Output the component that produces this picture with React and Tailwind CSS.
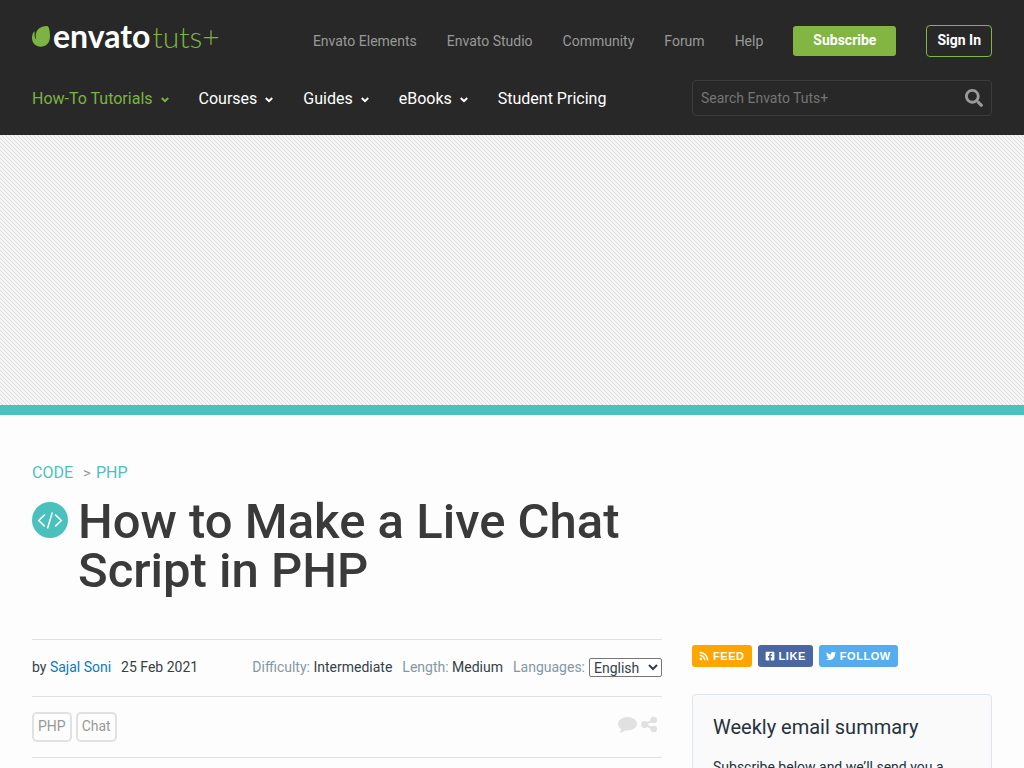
import React from "react";
import { FaSearch, FaShareAlt, FaRss, FaTwitter, FaFacebookSquare } from "react-icons/fa";

const topLinks = ["Envato Elements", "Envato Studio", "Community", "Forum", "Help"];
const navItems = [
  { label: "How-To Tutorials", menu: true, active: true },
  { label: "Courses", menu: true },
  { label: "Guides", menu: true },
  { label: "eBooks", menu: true },
  { label: "Student Pricing" },
];

function Chevron() {
  return (
    <svg width="8" height="6" viewBox="0 0 8 6" fill="none" stroke="currentColor" strokeWidth="2" className="mt-[2px]" aria-hidden="true">
      <path d="M0.8 1 4 4.2 7.2 1" />
    </svg>
  );
}

function Logo() {
  return (
    <a href="#" className="mb-[10px] flex h-8 items-center whitespace-nowrap font-['Lato',sans-serif] text-[32px] leading-8">
      <svg width="18" height="21" viewBox="0 0 18 21" className="mr-[3px] shrink-0" fill="#7cb342" aria-hidden="true">
        <path d="M15.800.3C13.400-.5 8.400.8 5.900 3.600 3.600 6.200 3.500 9.300 3.900 12.600c0 .4-.3.400-.5.1C2.700 11.200 2.500 8.800 2.700 6.100c0-.5-.5-.7-.8-.3C.7 7.400 0 9.700 0 12.100 0 17 3.800 20.700 8.600 20.700c5.600 0 8.800-3.900 9.300-8.800C18.300 7.600 17.400 1.500 15.800.3Z" />
      </svg>
      <span className="flex items-baseline gap-[2px]">
        <span className="font-bold text-white">envato</span>
        <span className="text-[30px] font-light text-[#7cb342]">tuts+</span>
      </span>
    </a>
  );
}

function Header() {
  return (
    <header className="bg-[#282828] px-8 pb-[19px] pt-[21px]">
      <div className="flex h-10 items-center justify-between">
        <Logo />
        <nav aria-label="Envato" className="flex items-center gap-[30px] text-sm text-[#999]">
          {topLinks.map((l) => (
            <a key={l} href="#" className="pb-px">{l}</a>
          ))}
          <a href="#" className="rounded-[3px] bg-[#82b541] px-5 pb-[6px] pt-1 font-bold text-white">Subscribe</a>
          <a href="#" className="rounded border border-[#82b541] px-[10px] pb-[6px] pt-1 font-bold text-white">Sign In</a>
        </nav>
      </div>
      <div className="mt-[19px] flex items-center justify-between">
        <nav aria-label="Main" className="flex items-center gap-[30px] pt-px text-base">
          {navItems.map((n) => (
            <a key={n.label} href="#" className={n.active ? "flex items-center gap-2 text-[#7cb342]" : "flex items-center gap-2 text-white"}>
              {n.label}
              {n.menu && <Chevron />}
            </a>
          ))}
        </nav>
        <form role="search" className="flex h-9 w-[300px] items-center rounded border border-[#3d3d3d] px-2" onSubmit={(e) => e.preventDefault()}>
          <input type="search" aria-label="Search Envato Tuts+" placeholder="Search Envato Tuts+" className="min-w-0 flex-1 bg-transparent text-sm text-white outline-none placeholder:text-[#757575]" />
          <button type="submit" aria-label="Search" className="text-[#999]">
            <FaSearch size={18} />
          </button>
        </form>
      </div>
    </header>
  );
}

function CodeBadge() {
  return (
    <svg width="36" height="36" viewBox="0 0 36 36" className="mt-[5px] shrink-0" fill="none" aria-hidden="true">
      <circle cx="18" cy="18" r="18" fill="#4bc1be" />
      <path d="M12.800 12.600 6.700 18.500l6.100 5.900M23.200 12.600l6.100 5.900-6.100 5.900M20.300 10.500l-4.800 16" stroke="#fff" strokeWidth="1.500" />
    </svg>
  );
}

function Share({ icon: Icon, label, color }) {
  return (
    <a href="#" className={`flex h-[22px] items-center gap-1 rounded-[3px] px-[7px] font-['Liberation_Sans',sans-serif] text-[11px] font-bold tracking-wider text-white ${color}`}>
      <Icon size={10} />
      {label}
    </a>
  );
}

export default function App() {
  return (
    <div className="min-h-screen bg-[#fdfdfd] font-['Roboto',sans-serif] text-[#3a3a3a]">
      <Header />
      <div className="h-[270px] bg-[#f5f5f5] bg-[linear-gradient(45deg,#dedede_12.5%,transparent_12.5%,transparent_50%,#dedede_50%,#dedede_62.5%,transparent_62.5%)] bg-size-[4px_4px]" />
      <div className="h-[10px] bg-[#4bc1be]" />
      <main className="grid grid-cols-[minmax(0,1fr)_300px] gap-x-[30px] px-8 pt-[46px]">
        <div className="min-h-[178px]">
          <nav aria-label="Breadcrumb" className="flex items-baseline text-base leading-6 text-[#4bc1be]">
            <a href="#">CODE</a>
            <span className="ml-[10px] mr-[5px] text-[15px] text-[#999]">&gt;</span>
            <a href="#">PHP</a>
          </nav>
          <div className="mt-3 flex gap-[10px]">
            <CodeBadge />
            <h1 className="text-[49px] font-medium leading-[49px]">How to Make a Live Chat Script in PHP</h1>
          </div>
        </div>
        <article className="col-start-1 border-t border-[#e1e1e1]">
          <div className="flex h-14 items-center justify-between pb-[2px] text-sm text-[#363f47]">
            <div className="flex gap-[10px]">
              <span>by <a href="#" className="text-[#0a7bbb]">Sajal Soni</a></span>
              <time dateTime="2021-02-25">25 Feb 2021</time>
            </div>
            <div className="flex items-center gap-[10px]">
              <span><span className="text-[#8398a5]">Difficulty:</span> Intermediate</span>
              <span><span className="text-[#8398a5]">Length:</span> Medium</span>
              <div className="flex items-center gap-1">
                <label htmlFor="language" className="text-[#8398a5]">Languages:</label>
                <select id="language" defaultValue="English" className="h-[19px] w-[73px] rounded-[2px] border border-[#767676] bg-white">
                  <option>English</option>
                </select>
              </div>
            </div>
          </div>
          <div className="flex h-[62px] items-center justify-between border-y border-[#e1e1e1]">
            <div className="flex gap-1 text-sm text-[#999]">
              <a href="#" className="rounded-[5px] border-2 border-[#e1e1e1] px-1 pb-1 pt-[2px]">PHP</a>
              <a href="#" className="rounded-[5px] border-2 border-[#e1e1e1] px-1 pb-1 pt-[2px]">Chat</a>
            </div>
            <div className="mb-[6px] mr-1 flex items-center gap-1 text-[#e1e1e1]">
              <a href="#" aria-label="Comments">
                <svg width="19" height="17" viewBox="0 0 19 17" fill="currentColor" aria-hidden="true">
                  <path d="M9.500 1C14.700 1 19 4 19 7.800s-4.300 6.700-9.500 6.700c-.8 0-1.600-.1-2.300-.2-1.600 1.500-3.600 2.200-5.700 2.400.9-.9 1.500-2 1.600-3.500C1.200 12 0 10 0 7.800 0 4 4.300 1 9.500 1Z" />
                </svg>
              </a>
              <a href="#" aria-label="Share">
                <svg width="17" height="17" viewBox="0 0 17 17" fill="currentColor" aria-hidden="true">
                  <circle cx="3.500" cy="8.500" r="3.400" />
                  <circle cx="12.700" cy="4" r="3.300" />
                  <circle cx="12.700" cy="13" r="3.300" />
                  <path d="M12.700 4 3.500 8.500l9.200 4.500" fill="none" stroke="currentColor" strokeWidth="2" />
                </svg>
              </a>
            </div>
          </div>
        </article>
        <aside className="col-start-2 pt-[6px]">
          <div className="flex gap-[6px]">
            <Share icon={FaRss} label="FEED" color="bg-[#ffa500]" />
            <Share icon={FaFacebookSquare} label="LIKE" color="bg-[#4b67a1]" />
            <Share icon={FaTwitter} label="FOLLOW" color="bg-[#55acee]" />
          </div>
          <section className="mt-[27px] rounded border border-[#dfe5ea] bg-[#fafafa] p-5 text-[#26323c]">
            <h2 className="text-xl leading-6">Weekly email summary</h2>
            <p className="mt-[18px] text-sm leading-5">Subscribe below and we’ll send you a</p>
          </section>
        </aside>
      </main>
    </div>
  );
}
